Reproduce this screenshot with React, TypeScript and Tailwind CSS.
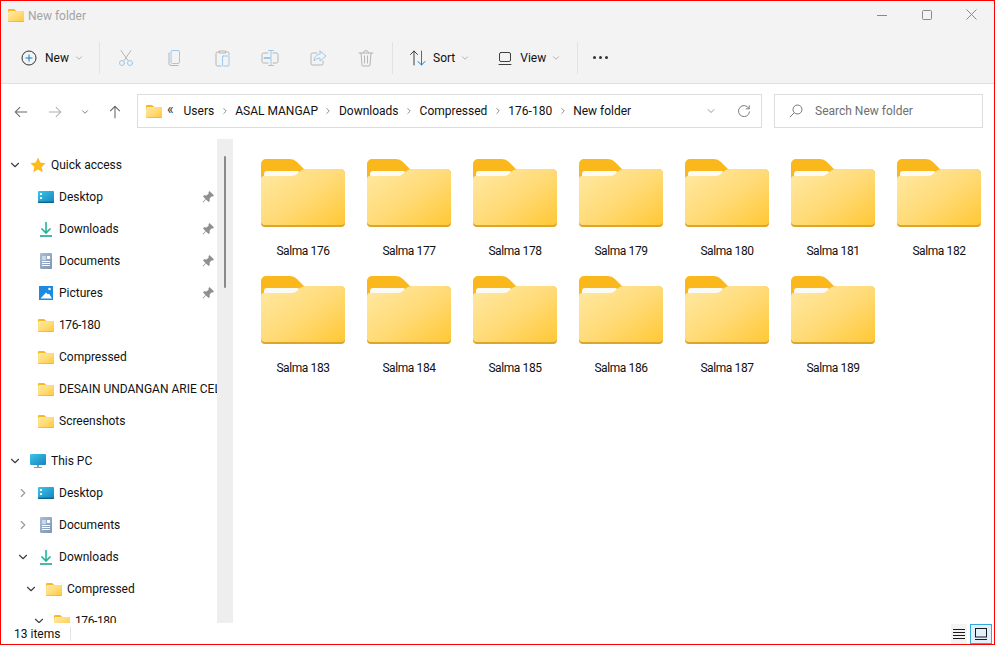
import { ChevronDown, ChevronRight } from 'lucide-react';
import type { ReactNode } from 'react';

const names = ['Salma 176', 'Salma 177', 'Salma 178', 'Salma 179', 'Salma 180', 'Salma 181', 'Salma 182', 'Salma 183', 'Salma 184', 'Salma 185', 'Salma 186', 'Salma 187', 'Salma 189'];
const crumbs = ['Users', 'ASAL MANGAP', 'Downloads', 'Compressed', '176-180', 'New folder'];

function Folder({ className }: { className: string }) {
  return (
    <svg viewBox="0 0 84 68" className={className}>
      <path d="M0 5a5 5 0 0 1 5-5h24q4 0 7 3l7 7h36a5 5 0 0 1 5 5v20H0z" fill="#fbb81c" />
      <path d="M43 10h36a5 5 0 0 1 5 5v2H40z" fill="#d8bd7c" />
      <path d="M3 15q0-3 3-3h31l3 3-4 5H3z" fill="#fbfaf5" />
      <path d="M0 20q0-3 3-3h28q3 0 5-2l2-2q3-3 7-3h34a5 5 0 0 1 5 5v48a5 5 0 0 1-5 5H5a5 5 0 0 1-5-5z" fill="url(#folderFront)" />
      <path d="M0 63v1a4 4 0 0 0 4 4h76a4 4 0 0 0 4-4v-1a4 4 0 0 1-4 3H4a4 4 0 0 1-4-3z" fill="#dca52c" />
    </svg>
  );
}

const Star = () => (
  <svg viewBox="0 0 16 16" className="w-4 h-4">
    <path d="M8 .6l2.3 4.9 5.2.7-3.8 3.7 1 5.3L8 12.6l-4.7 2.6 1-5.3L.5 6.2l5.2-.7z" fill="#fdbb1e" />
  </svg>
);

const DesktopIcon = () => (
  <svg viewBox="0 0 16 16" className="w-4 h-4">
    <rect x="0" y="2" width="16" height="12" rx="1" fill="url(#desktopFill)" />
    <rect x="0" y="12.6" width="16" height="1.4" fill="#11638f" />
    <rect x="2" y="4" width="2" height="2" fill="#fff" />
    <rect x="2" y="8" width="2" height="2" fill="#fff" />
  </svg>
);

const DownloadIcon = () => (
  <svg viewBox="0 0 16 16" className="w-4 h-4" fill="none" stroke="#1fb59a" strokeWidth="1.6">
    <path d="M8 1v10.5M3.5 7.5 8 12l4.5-4.5" />
    <path d="M2 15h12" stroke="#18a78f" />
  </svg>
);

const DocumentIcon = () => (
  <svg viewBox="0 0 16 16" className="w-4 h-4">
    <rect x="2" y="0" width="12" height="16" rx="1" fill="url(#docFill)" />
    <rect x="9" y="3" width="3" height="3" fill="#fff" />
    <path d="M4 4h4M4 6h4M4 8.5h8M4 10.5h8M4 12.5h8" stroke="#fff" strokeWidth="1" />
  </svg>
);

const PictureIcon = () => (
  <svg viewBox="0 0 16 16" className="w-4 h-4">
    <rect x="1" y="1" width="14" height="14" fill="#1b8ae0" />
    <circle cx="11.5" cy="4" r="1.3" fill="#fff" />
    <path d="M2.500 13.500 8 7.500l2 2 1-1 3 5z" fill="#fff" />
  </svg>
);

const MonitorIcon = () => (
  <svg viewBox="0 0 16 16" className="w-4 h-4">
    <rect x="0" y="1" width="16" height="11" rx="1" fill="url(#desktopFill)" />
    <rect x="7" y="12" width="2" height="2" fill="#8a9aa5" />
    <rect x="4" y="14" width="8" height="1" fill="#8a9aa5" />
  </svg>
);

const Pin = () => (
  <svg viewBox="0 0 12 12" className="w-3 h-3">
    <path d="M7.500 0 12 4.500 10.800 5.500 9.800 5.200 7.600 7.400 7.800 10 6.600 11 4 8.400 1 11.500.5 11 3.600 8 1 5.400 2 4.200 4.600 4.400 6.800 2.200 6.500 1.200z" fill="#8f8f8f" />
  </svg>
);

function SmallFolder() {
  return <Folder className="w-4 h-[13px]" />;
}

function NavRow({ indent, chevron, icon, label, pin, strong, tight }: { indent: string; chevron?: 'down' | 'right'; icon: ReactNode; label: string; pin?: boolean; strong?: boolean; tight?: boolean }) {
  return (
    <div className={`flex items-center h-8 shrink-0 ${indent} ${strong ? 'mt-2' : ''}`}>
      <span className="w-[22px] shrink-0 flex items-center">
        {chevron === 'down' && <ChevronDown className="w-[14px] h-[14px] text-[#404040]" strokeWidth={2} />}
        {chevron === 'right' && <ChevronRight className="w-[14px] h-[14px] text-[#999999]" strokeWidth={2} />}
      </span>
      <span className="w-4 h-4 shrink-0 flex items-center justify-center">{icon}</span>
      <span className={`ml-[5px] whitespace-nowrap overflow-hidden flex-1 min-w-0 text-[#111111] ${tight ? 'tracking-[-0.4px]' : ''}`}>{label}</span>
      {pin && <span className="w-3 mr-[3px] ml-1 shrink-0"><Pin /></span>}
    </div>
  );
}

const ToolIcon = ({ children }: { children: ReactNode }) => (
  <svg viewBox="0 0 20 20" className="w-5 h-5" fill="none" strokeWidth="1" strokeLinecap="round" strokeLinejoin="round">
    {children}
  </svg>
);

function Dropdown() {
  return <ChevronDown className="w-[10px] h-[10px] text-[#8c8c8c]" strokeWidth={1.5} />;
}

export default function App() {
  return (
    <div className="w-[995px] h-[645px] border border-[#ff0000] bg-white flex flex-col overflow-hidden text-xs text-[#111111] font-['Roboto','Noto_Sans',sans-serif]">
      <svg className="absolute w-0 h-0">
        <defs>
          <linearGradient id="folderFront" x1="0" y1="0" x2="1" y2="1">
            <stop offset="0" stopColor="#ffe9a4" />
            <stop offset="0.5" stopColor="#ffdb78" />
            <stop offset="1" stopColor="#ffc733" />
          </linearGradient>
          <linearGradient id="desktopFill" x1="0" y1="0" x2="1" y2="1">
            <stop offset="0" stopColor="#3cc6e6" />
            <stop offset="1" stopColor="#1683c0" />
          </linearGradient>
          <linearGradient id="docFill" x1="0" y1="0" x2="1" y2="1">
            <stop offset="0" stopColor="#a9bdd6" />
            <stop offset="1" stopColor="#7e94b3" />
          </linearGradient>
        </defs>
      </svg>

      {/* Title bar + command bar */}
      <div className="h-[83px] shrink-0 bg-[#f3f3f3] border-b border-[#e0e0e0] flex flex-col">
        <div className="h-[29px] flex items-center pl-[7px] shrink-0">
          <Folder className="w-4 h-[13px]" />
          <span className="ml-[4px] text-[#a3a3a3]">New folder</span>
          <div className="ml-auto mb-[2px] flex items-center">
            <span className="w-[45px] flex justify-center">
              <svg width="10" height="10" viewBox="0 0 10 10"><path d="M0 5.5h10" stroke="#8a8a8a" /></svg>
            </span>
            <span className="w-[45px] flex justify-center">
              <svg width="10" height="10" viewBox="0 0 10 10"><rect x=".5" y=".5" width="9" height="9" rx="1" fill="none" stroke="#8a8a8a" /></svg>
            </span>
            <span className="w-[45px] flex justify-center">
              <svg width="11" height="11" viewBox="0 0 11 11"><path d="M.5.5l10 10M10.500.5l-10 10" stroke="#8a8a8a" /></svg>
            </span>
          </div>
        </div>
        <div className="mt-[11px] h-[33px] flex items-center text-[#111111]">
          <div className="flex items-center w-[98px] pl-[20px] shrink-0">
            <svg viewBox="0 0 16 16" className="w-4 h-4" fill="none">
              <circle cx="8" cy="8" r="7" stroke="#333333" />
              <path d="M8 4.500v7M4.500 8h7" stroke="#0b7fd6" />
            </svg>
            <span className="ml-2">New</span>
            <span className="ml-[5px]"><Dropdown /></span>
          </div>
          <div className="w-px h-8 bg-[#e2e2e2] shrink-0" />
          <div className="flex items-center pl-4 gap-7 shrink-0">
            <ToolIcon>
              <g stroke="#b5b5b5"><path d="M5 2.500 12 12.500M15 2.500 8 12.500" /></g>
              <g stroke="#9ec9ec"><circle cx="6" cy="15" r="2.500" /><circle cx="14" cy="15" r="2.500" /></g>
            </ToolIcon>
            <ToolIcon>
              <path d="M5 5v10.500q0 2 2 2h7" stroke="#b5b5b5" />
              <rect x="7" y="2.500" width="8.500" height="13" rx="1.500" stroke="#9ec9ec" />
            </ToolIcon>
            <ToolIcon>
              <path d="M7 4H5.500Q4 4 4 5.500v11Q4 18 5.500 18H9M14 4h1.500Q17 4 17 5.500V7M7.500 3h6v2h-6z" stroke="#b5b5b5" />
              <rect x="10.500" y="8" width="6.500" height="10" rx="1" stroke="#9ec9ec" />
            </ToolIcon>
            <ToolIcon>
              <path d="M8 5H3.500Q2 5 2 6.500v7Q2 15 3.500 15H8M13 5h3.500Q18 5 18 6.500v7q0 1.500-1.500 1.500H13" stroke="#b5b5b5" />
              <path d="M8.500 2.500h5M8.500 17.500h5M11 2.500v15" stroke="#9ec9ec" />
              <path d="M4.500 10h5" stroke="#9ec9ec" strokeWidth="2" />
            </ToolIcon>
            <ToolIcon>
              <path d="M9 5H4.500Q3 5 3 6.500v9Q3 17 4.500 17h9q1.500 0 1.500-1.500V13" stroke="#b5b5b5" />
              <path d="M12 3l6 5-6 5v-3q-4 0-6 3 0-6 6-7z" stroke="#9ec9ec" />
            </ToolIcon>
            <ToolIcon>
              <path d="M3 5h14M7.500 5q0-2.500 2.500-2.500T12.500 5M5 5l1 12q0 1 1 1h6q1 0 1-1l1-12M8.500 8v7M11.500 8v7" stroke="#b5b5b5" />
            </ToolIcon>
          </div>
          <div className="w-px h-8 bg-[#e2e2e2] ml-4 shrink-0" />
          <div className="flex items-center pl-[15px] shrink-0">
            <ToolIcon>
              <path d="M6 17V3M2.500 6.500 6 3l3.500 3.500" stroke="#404040" />
              <path d="M13.500 3v14M10 13.500l3.500 3.500 3.500-3.500" stroke="#0b7fd6" />
            </ToolIcon>
            <span className="ml-[5px]">Sort</span>
            <span className="ml-[5px]"><Dropdown /></span>
            <span className="ml-[25px]">
              <ToolIcon>
                <rect x="4.500" y="4.500" width="11" height="9" rx="1.500" stroke="#404040" />
                <path d="M4 16.500h12" stroke="#404040" />
              </ToolIcon>
            </span>
            <span className="ml-[5px]">View</span>
            <span className="ml-[5px]"><Dropdown /></span>
          </div>
          <div className="w-px h-8 bg-[#e2e2e2] ml-[16px] shrink-0" />
          <div className="ml-[15px] flex gap-[3px]">
            <span className="w-[3px] h-[3px] rounded-full bg-[#333333]" />
            <span className="w-[3px] h-[3px] rounded-full bg-[#333333]" />
            <span className="w-[3px] h-[3px] rounded-full bg-[#333333]" />
          </div>
        </div>
      </div>

      {/* Address row */}
      <div className="h-[55px] shrink-0 flex items-center">
        <div className="flex items-center w-[136px] shrink-0 pl-[13px]">
          <svg viewBox="0 0 16 16" className="w-[14px] h-[14px]" fill="none" stroke="#666666" strokeWidth="1.200"><path d="M15 8H1.500M7 2.500 1.500 8 7 13.500" /></svg>
          <svg viewBox="0 0 16 16" className="w-[14px] h-[14px] ml-[20px]" fill="none" stroke="#b0b0b0" strokeWidth="1.200"><path d="M1 8h13.500M9 2.500 14.500 8 9 13.500" /></svg>
          <ChevronDown className="w-[10px] h-[10px] ml-[18px] text-[#666666]" strokeWidth={2} />
          <svg viewBox="0 0 16 16" className="w-[14px] h-[14px] ml-[18px]" fill="none" stroke="#666666" strokeWidth="1.200"><path d="M8 15V1.500M2.500 7 8 1.500 13.500 7" /></svg>
        </div>
        <div className="w-[625px] h-[34px] mb-px border border-[#dcdcdc] flex items-center pl-2 shrink-0">
          <Folder className="w-4 h-[13px]" />
          <span className="ml-[5px] text-sm leading-none mb-1 text-[#333333]">«</span>
          <div className="flex items-center ml-[10px] text-[#111111]">
            {crumbs.map((crumb, i) => (
              <span key={crumb} className="flex items-center">
                {i > 0 && <ChevronRight className="w-[10px] h-[10px] mx-[5.5px] text-[#777777]" strokeWidth={2} />}
                {crumb}
              </span>
            ))}
          </div>
          <ChevronDown className="w-3 h-3 ml-auto text-[#777777]" strokeWidth={1.5} />
          <svg viewBox="0 0 16 16" className="w-[14px] h-[14px] ml-[20px] mr-[10px]" fill="none" stroke="#777777" strokeWidth="1.100"><path d="M13.500 5A6.300 6.300 0 1 0 14.300 8.500M14 1.500V5.500H10" /></svg>
        </div>
        <div className="w-[209px] h-[34px] mb-px ml-[12px] border border-[#dcdcdc] flex items-center pl-[14px] text-[#6f6f6f] shrink-0">
          <svg viewBox="0 0 14 14" className="w-[14px] h-[14px]" fill="none" stroke="#777777"><circle cx="8.500" cy="5.500" r="4.500" /><path d="M5.200 8.800.8 13.200" /></svg>
          <span className="ml-[12px]">Search New folder</span>
        </div>
      </div>

      {/* Body */}
      <div className="h-[484px] shrink-0 flex">
        <div className="w-[216px] h-full overflow-hidden pt-[10px] flex flex-col shrink-0">
          <NavRow indent="pl-[7px]" chevron="down" icon={<Star />} label="Quick access" />
          <NavRow indent="pl-[15px]" icon={<DesktopIcon />} label="Desktop" pin />
          <NavRow indent="pl-[15px]" icon={<DownloadIcon />} label="Downloads" pin />
          <NavRow indent="pl-[15px]" icon={<DocumentIcon />} label="Documents" pin />
          <NavRow indent="pl-[15px]" icon={<PictureIcon />} label="Pictures" pin />
          <NavRow indent="pl-[15px]" icon={<SmallFolder />} label="176-180" tight />
          <NavRow indent="pl-[15px]" icon={<SmallFolder />} label="Compressed" />
          <NavRow indent="pl-[15px]" icon={<SmallFolder />} label="DESAIN UNDANGAN ARIE CEL" />
          <NavRow indent="pl-[15px]" icon={<SmallFolder />} label="Screenshots" />
          <NavRow indent="pl-[7px]" chevron="down" icon={<MonitorIcon />} label="This PC" strong />
          <NavRow indent="pl-[15px]" chevron="right" icon={<DesktopIcon />} label="Desktop" />
          <NavRow indent="pl-[15px]" chevron="right" icon={<DocumentIcon />} label="Documents" />
          <NavRow indent="pl-[15px]" chevron="down" icon={<DownloadIcon />} label="Downloads" />
          <NavRow indent="pl-[23px]" chevron="down" icon={<SmallFolder />} label="Compressed" />
          <NavRow indent="pl-[31px]" chevron="down" icon={<SmallFolder />} label="176-180" tight />
        </div>
        <div className="w-4 h-full bg-[#eeeeee] shrink-0 pt-[17px] flex justify-center">
          <div className="w-[2px] h-[132px] bg-[#8a8a8a] rounded-full" />
        </div>
        <div className="flex-1 min-w-0 pt-[20px] pl-[17px]">
          <div className="grid grid-cols-[repeat(7,106px)] auto-rows-[117px]">
            {names.map((name) => (
              <div key={name} className="flex flex-col items-center">
                <Folder className="w-[84px] h-[68px]" />
                <span className="mt-[16px] tracking-[-0.4px] text-[#111111]">{name}</span>
              </div>
            ))}
          </div>
        </div>
      </div>

      {/* Status bar */}
      <div className="flex-1 flex items-center pl-[13px]">
        <span className="pt-px">13 items</span>
        <div className="w-px h-[14px] bg-[#e5e5e5] ml-[10px]" />
        <div className="ml-auto flex items-center mr-[2px]">
          <span className="w-4 h-5 bg-[#f3f3f3] flex items-center justify-center">
            <svg width="12" height="10" viewBox="0 0 12 10"><path d="M0 .5h12M0 3.500h12M0 6.500h12M0 9.500h12" stroke="#1a1a1a" /></svg>
          </span>
          <span className="w-[22px] h-5 ml-[3px] bg-[#e1f0fa] border border-[#35a7e0] flex items-center justify-center">
            <svg width="12" height="12" viewBox="0 0 12 12" fill="none"><rect x=".5" y=".5" width="11" height="8.500" stroke="#1a1a1a" /><path d="M0 11.500h12" stroke="#1a1a1a" /></svg>
          </span>
        </div>
      </div>
    </div>
  );
}
